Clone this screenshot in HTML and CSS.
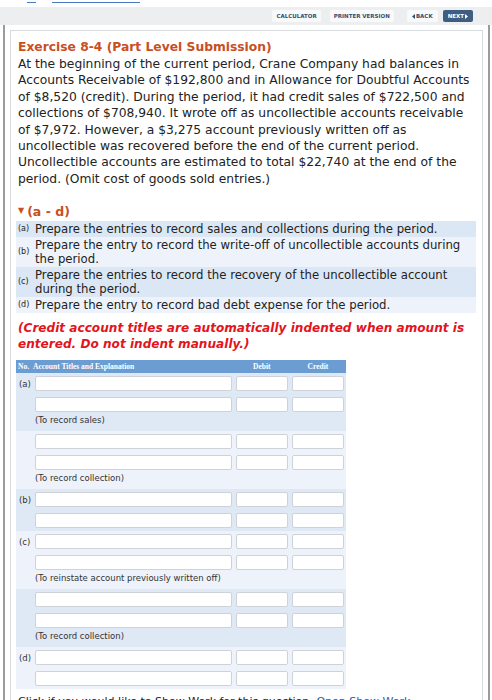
FILE: index.html
```html
<!DOCTYPE html>
<html lang="en">
<head>
    <meta charset="UTF-8">
    <title>Exercise 8-4</title>
    <link rel="stylesheet" href="styles.css">
</head>
<body>
    <!-- links strip, scrolled mostly out of view above the toolbar -->
    <div class="crumbs">
        <span class="link short"></span>
        <span class="link long"></span>
    </div>

    <div class="toolbar">
        <a class="tool" href="#">Calculator</a>
        <a class="tool" href="#">Printer Version</a>
        <a class="tool back" href="#"><svg width="3" height="5" viewBox="0 0 3 5"><path d="M3 0 L0 2.5 L3 5 Z" fill="#3a4e6a"/></svg>Back</a>
        <a class="tool next" href="#">Next<svg width="3" height="5" viewBox="0 0 3 5"><path d="M0 0 L3 2.5 L0 5 Z" fill="#fff"/></svg></a>
    </div>

    <div class="frame">
        <div class="panel">
            <h1 class="title">Exercise 8-4 (Part Level Submission)</h1>
            <p class="problem">At the beginning of the current period, Crane Company had balances in Accounts Receivable of $192,800 and in Allowance for Doubtful Accounts of $8,520 (credit). During the period, it had credit sales of $722,500 and collections of $708,940. It wrote off as uncollectible accounts receivable of $7,972. However, a $3,275 account previously written off as uncollectible was recovered before the end of the current period. Uncollectible accounts are estimated to total $22,740 at the end of the period. (Omit cost of goods sold entries.)</p>

            <h2 class="part"><span class="caret">&#9660;</span>(a - d)</h2>
            <ul class="tasks">
                <li class="shade"><span class="tag">(a)</span><span>Prepare the entries to record sales and collections during the period.</span></li>
                <li><span class="tag">(b)</span><span>Prepare the entry to record the write-off of uncollectible accounts during the period.</span></li>
                <li class="shade"><span class="tag">(c)</span><span>Prepare the entries to record the recovery of the uncollectible account during the period.</span></li>
                <li><span class="tag">(d)</span><span>Prepare the entry to record bad debt expense for the period.</span></li>
            </ul>

            <p class="warning">(Credit account titles are automatically indented when amount is entered. Do not indent manually.)</p>

            <table class="journal">
                <thead>
                    <tr>
                        <th class="no">No.</th>
                        <th class="acct">Account Titles and Explanation</th>
                        <th class="amt">Debit</th>
                        <th class="amt">Credit</th>
                    </tr>
                </thead>
                <tbody class="dark">
                    <tr><td class="no">(a)</td><td><input type="text"></td><td><input type="text"></td><td><input type="text"></td></tr>
                    <tr><td></td><td><input type="text"></td><td><input type="text"></td><td><input type="text"></td></tr>
                    <tr class="note"><td></td><td colspan="3">(To record sales)</td></tr>
                </tbody>
                <tbody class="light">
                    <tr><td></td><td><input type="text"></td><td><input type="text"></td><td><input type="text"></td></tr>
                    <tr><td></td><td><input type="text"></td><td><input type="text"></td><td><input type="text"></td></tr>
                    <tr class="note"><td></td><td colspan="3">(To record collection)</td></tr>
                </tbody>
                <tbody class="dark">
                    <tr><td class="no">(b)</td><td><input type="text"></td><td><input type="text"></td><td><input type="text"></td></tr>
                    <tr><td></td><td><input type="text"></td><td><input type="text"></td><td><input type="text"></td></tr>
                </tbody>
                <tbody class="light">
                    <tr><td class="no">(c)</td><td><input type="text"></td><td><input type="text"></td><td><input type="text"></td></tr>
                    <tr><td></td><td><input type="text"></td><td><input type="text"></td><td><input type="text"></td></tr>
                    <tr class="note"><td></td><td colspan="3">(To reinstate account previously written off)</td></tr>
                </tbody>
                <tbody class="dark">
                    <tr><td></td><td><input type="text"></td><td><input type="text"></td><td><input type="text"></td></tr>
                    <tr><td></td><td><input type="text"></td><td><input type="text"></td><td><input type="text"></td></tr>
                    <tr class="note"><td></td><td colspan="3">(To record collection)</td></tr>
                </tbody>
                <tbody class="light">
                    <tr><td class="no">(d)</td><td><input type="text"></td><td><input type="text"></td><td><input type="text"></td></tr>
                    <tr><td></td><td><input type="text"></td><td><input type="text"></td><td><input type="text"></td></tr>
                </tbody>
            </table>

            <p class="showwork">Click if you would like to Show Work for this question: <a href="#">Open Show Work</a></p>
        </div>
    </div>
</body>
</html>
```

FILE: styles.css
```css
body {
    margin: 0;
    font-family: "DejaVu Sans", Verdana, sans-serif;
    color: #222;
    background: #fff;
}
.crumbs {
    display: flex;
    gap: 16px;
    height: 7px;
    padding-left: 27px;
    box-sizing: border-box;
}
.crumbs .link {
    display: block;
    height: 1px;
    margin-top: 1px;
    border-bottom: 1px solid #4a78c2;
}
.crumbs .short {
    width: 9px;
}
.crumbs .long {
    width: 88px;
}
.toolbar {
    display: flex;
    justify-content: flex-end;
    align-items: center;
    height: 18px;
    padding-right: 19px;
    background: #edeef0;
}
.tool {
    display: flex;
    align-items: center;
    gap: 1px;
    height: 12px;
    padding: 0 4px;
    margin-left: 9px;
    font-size: 5.5px;
    font-weight: bold;
    text-transform: uppercase;
    text-decoration: none;
    color: #3a4e6a;
    background: #f8f9fb;
    border-radius: 2px;
}
.tool.back {
    margin-left: 13px;
    padding: 0 5px;
}
.tool.next {
    margin-left: 5px;
    padding: 0 5px;
    background: #3e5d80;
    color: #fff;
}
.frame {
    margin: 0 2px 0 3px;
    padding: 5px 5px 0 5px;
    border-left: 2px solid #9c9c9c;
    border-right: 2px solid #9c9c9c;
}
.panel {
    border: 1px solid #d9dcdf;
    border-bottom: none;
    padding: 9px 3px 0 7px;
}
.title {
    margin: 0 0 2px;
    font-size: 12.3px;
    font-weight: bold;
    color: #c8501f;
}
.problem {
    margin: 0;
    font-size: 12.3px;
    line-height: 16.4px;
    color: #222;
}
.part {
    margin: 17px 0 2px;
    font-size: 12.5px;
    font-weight: bold;
    color: #c8501f;
}
.caret {
    font-size: 8px;
    vertical-align: 3px;
    margin-right: 3px;
}
.tasks {
    list-style: none;
    margin: 0 3px 0 -2px;
    padding: 0;
}
.tasks li {
    display: flex;
    align-items: center;
    padding: 1px 2px;
    font-size: 11.7px;
    line-height: 14px;
    background: #eef3fb;
}
.tasks li.shade {
    background: #dce7f5;
}
.tag {
    flex: none;
    width: 17px;
    font-size: 8px;
}
.warning {
    margin: 7px 0 8px;
    font-size: 12.1px;
    line-height: 16px;
    font-weight: bold;
    font-style: italic;
    color: #e3141c;
}
.journal {
    margin-left: -2px;
    border-collapse: collapse;
    width: 330px;
    table-layout: fixed;
}
.journal th {
    height: 13px;
    padding: 0;
    background: #6c9dd2;
    color: #fff;
    font-family: "Liberation Serif", "Times New Roman", serif;
    font-size: 7.5px;
    font-weight: bold;
    text-align: center;
}
.journal th.no {
    width: 15px;
    text-align: left;
    padding-left: 2px;
}
.journal th.acct {
    width: 200px;
    text-align: left;
}
.journal th.amt {
    width: 56px;
}
.journal td {
    height: 21px;
    padding: 0 2px;
    font-size: 8.5px;
    color: #333;
}
.journal td.no {
    padding-left: 3px;
}
.journal tr.note td {
    height: 16px;
    vertical-align: top;
}
.journal input {
    display: block;
    width: 100%;
    height: 15px;
    margin: 0;
    padding: 0;
    box-sizing: border-box;
    border: 1px solid #cfd2d6;
    border-radius: 2px;
    background: #fff;
}
.journal tbody.dark {
    background: #dfe8f5;
}
.journal tbody.light {
    background: #eef3fb;
}
.showwork {
    margin: 6px 0 0;
    font-size: 11px;
}
.showwork a {
    color: #2a5db0;
}
```
